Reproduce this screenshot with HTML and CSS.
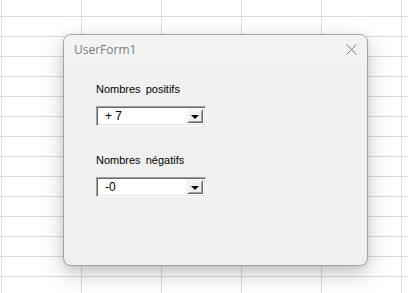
FILE: index.html
```html
<!DOCTYPE html>
<html lang="fr">
<head>
  <meta charset="UTF-8" />
  <title>UserForm1</title>
  <link rel="stylesheet" href="styles.css">
</head>
<body>
  <div class="fenetre">
    <div class="titre">
      <span>UserForm1</span>
      <svg class="fermer" width="11" height="11" viewBox="0 0 11 11">
        <path d="M0.5 0.5 L10.5 10.5 M10.5 0.5 L0.5 10.5" stroke="#7a7a7a" stroke-width="1" fill="none" />
      </svg>
    </div>
    <div class="contenu">
      <div class="groupe">
        <div class="etiquette">Nombres positifs</div>
        <div class="combo">
          <div class="valeur">+ 7</div>
          <div class="fleche"><span></span></div>
        </div>
      </div>
      <div class="groupe">
        <div class="etiquette">Nombres négatifs</div>
        <div class="combo">
          <div class="valeur">-0</div>
          <div class="fleche"><span></span></div>
        </div>
      </div>
    </div>
  </div>
</body>
</html>
```

FILE: styles.css
```css
body {
  margin: 0;
  height: 293px;
  overflow: hidden;
  background-color: #ffffff;
  background-image:
    linear-gradient(to right, #dadada 1px, transparent 1px),
    linear-gradient(to bottom, #dadada 1px, transparent 1px);
  background-size: 80px 20px;
  background-position: 1px 16px;
  padding: 34px 0 0 63px;
  box-sizing: border-box;
}

.fenetre {
  width: 305px;
  height: 232px;
  box-sizing: border-box;
  border: 1px solid #a3a3a3;
  border-radius: 8px;
  background-color: #f0f0f0;
  box-shadow: 0 8px 22px rgba(0, 0, 0, 0.22), 0 2px 6px rgba(0, 0, 0, 0.08);
  overflow: hidden;
}

.titre {
  height: 29px;
  background-color: #f3f3f3;
  display: flex;
  align-items: center;
  justify-content: space-between;
  padding: 0 10px 0 10px;
  font-family: 'Open Sans', sans-serif;
  font-size: 12px;
  color: #7b7b7b;
}

.titre span {
  margin-top: -1px;
}

.fermer {
  margin-top: -1px;
}

.contenu {
  padding: 19px 0 0 32px;
  font-family: 'Liberation Sans', Arial, sans-serif;
  font-size: 11px;
  color: #000;
}

.groupe {
  margin-bottom: 28px;
}

.etiquette {
  word-spacing: 2px;
  height: 13px;
  line-height: 13px;
  margin-bottom: 10px;
}

.combo {
  width: 110px;
  height: 20px;
  box-sizing: border-box;
  border-top: 1px solid #a0a0a0;
  border-left: 1px solid #a0a0a0;
  border-right: 1px solid #ffffff;
  border-bottom: 1px solid #ffffff;
  box-shadow: inset 1px 1px 0 #696969, inset -1px -1px 0 #e3e3e3;
  background-color: #ffffff;
  display: flex;
  padding: 2px;
}

.valeur {
  flex: 1;
  padding-left: 6px;
  line-height: 14px;
  font-size: 12px;
}

.fleche {
  width: 16px;
  box-sizing: border-box;
  background-color: #f0f0f0;
  border-top: 1px solid #f0f0f0;
  border-left: 1px solid #f0f0f0;
  border-right: 1px solid #696969;
  border-bottom: 1px solid #696969;
  box-shadow: inset 1px 1px 0 #ffffff, inset -1px -1px 0 #a0a0a0;
  display: flex;
  align-items: center;
  justify-content: center;
}

.fleche span {
  width: 0;
  height: 0;
  border-left: 4px solid transparent;
  border-right: 4px solid transparent;
  border-top: 4px solid #000;
  margin-top: 1px;
}
```
